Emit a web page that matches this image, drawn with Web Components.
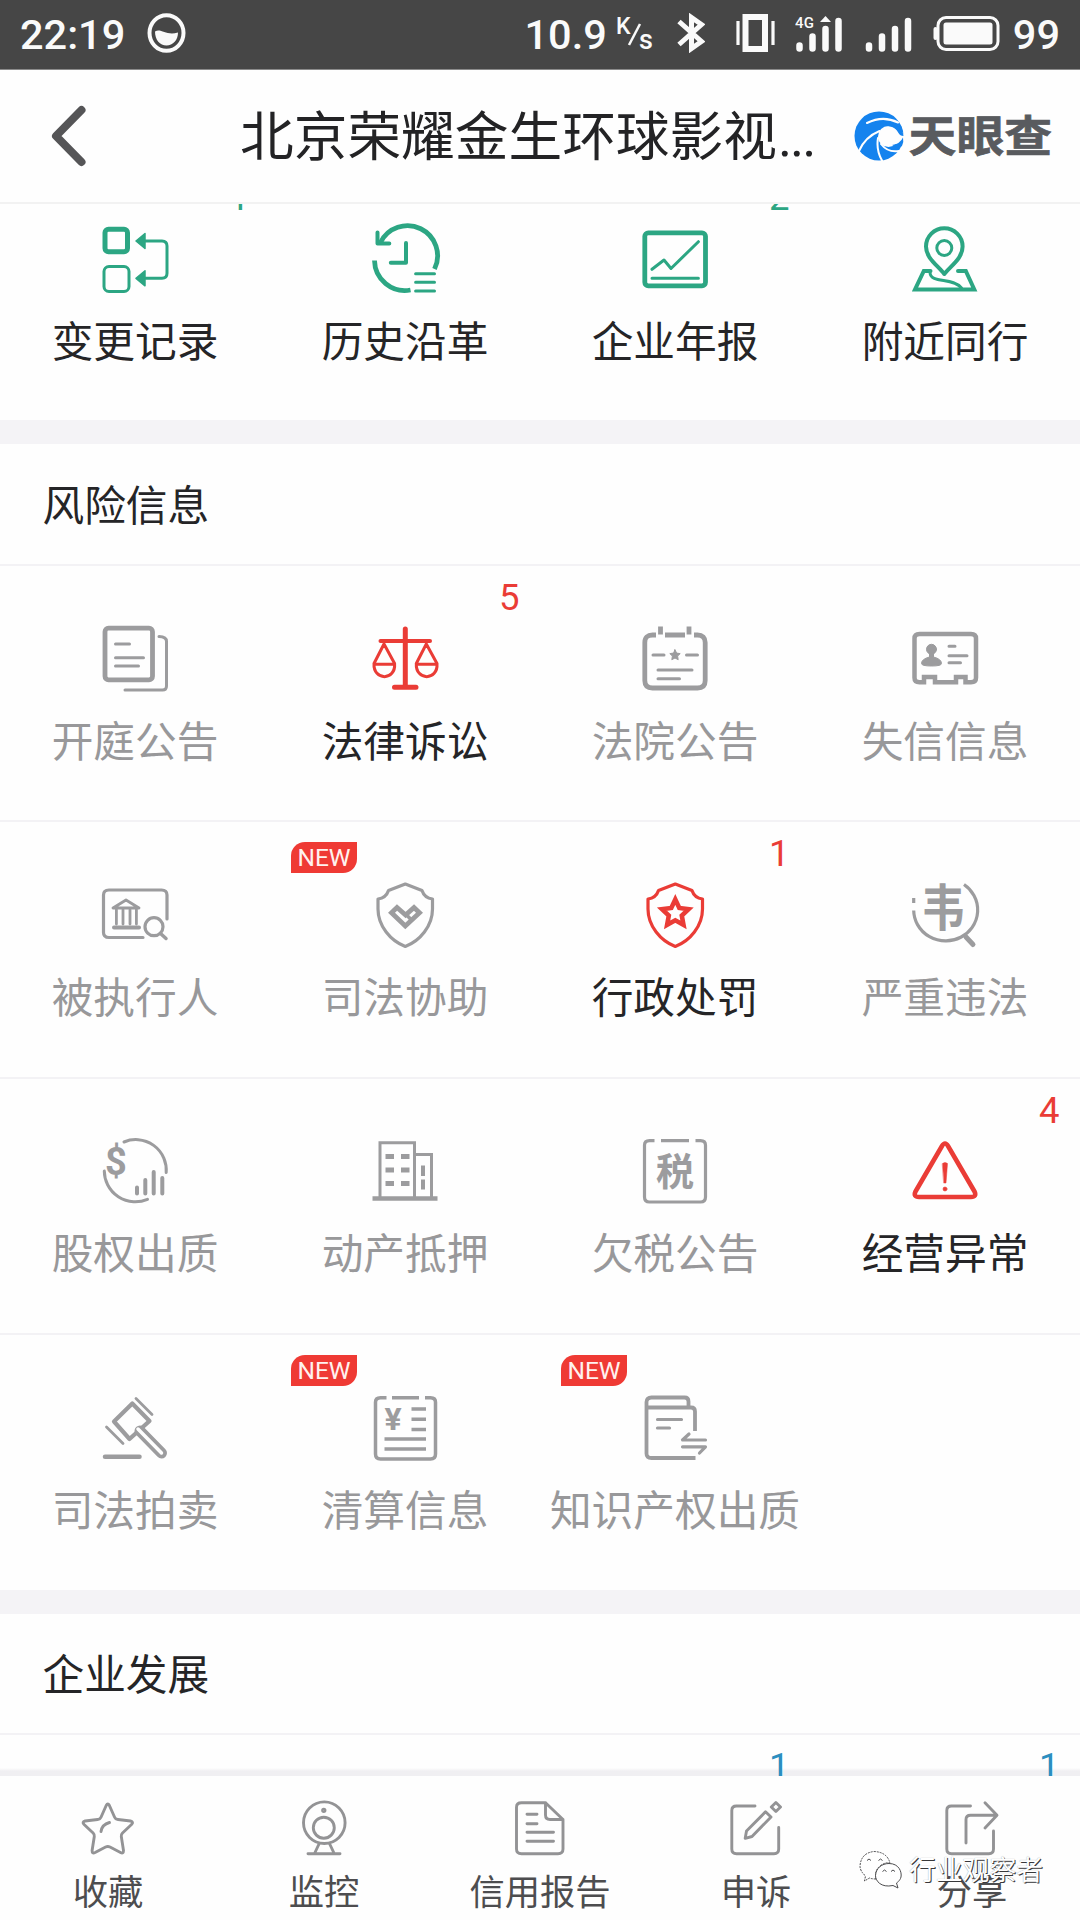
<!DOCTYPE html>
<html lang="zh-CN">
<head>
<meta charset="utf-8">
<title>天眼查</title>
<style>
html,body{margin:0;padding:0;background:#fefefe}
body{font-family:"Noto Sans CJK SC",sans-serif;color:#252527}
</style>
</head>
<body>
<company-app></company-app>
<script>
const define = (name, html, setup) => customElements.define(name, class extends HTMLElement {
  constructor() {
    super();
    this.attachShadow({ mode: 'open' });
  }
  connectedCallback() {
    this.shadowRoot.innerHTML = typeof html === 'function' ? html(this) : html;
    if (setup) setup(this);
  }
});

const SHIELD = '<path stroke-width="3.2" d="M34.3 3 51 9.5Q53.5 17 61.5 18V28C61.5 45 49 60 34.3 65.5 19.6 60 7 45 7 28V18Q15 17 17.5 9.5Z"/>';
const star = (cx, cy, R, r) => Array.from({ length: 10 }, (_, i) => {
  const a = -Math.PI / 2 + i * Math.PI / 5, q = i % 2 ? r : R;
  return (cx + q * Math.cos(a)).toFixed(1) + ',' + (cy + q * Math.sin(a)).toFixed(1);
}).join(' ');

const ICONS = {
  change: '<rect x="4" y="4.2" width="22.5" height="22.5" rx="3.5" stroke-width="5"/><rect x="3" y="41.5" width="25" height="25" rx="5" stroke-width="3"/><path stroke-width="3" d="M43 16H61q5 0 5 5V48.300q0 5-5 5H43"/><path class="f" stroke-width="1.500" d="M35 16 44 8.500V23.500ZM35 53.300 44 45.800V60.800Z"/>',
  history: '<path stroke-width="4.800" stroke-linecap="butt" d="M9.500 17.500A30 30 0 0 1 63.500 44M3.500 35.500A30.500 30.500 0 0 0 39.500 65"/><path stroke-width="4" d="M6.500 7.500V18.500H18.300M35 18V37.700H19.800"/><path stroke-width="3" d="M44.600 48.700H63.500M44.600 57.300H63.500M44.600 66H63.500"/>',
  report: '<rect x="3.800" y="7.800" width="60.700" height="53" rx="3.500" stroke-width="4.800"/><path stroke-width="3" d="M11 44.300 23 35 30 43.500 57.400 16.700M11 53.300H57.400"/>',
  nearby: '<path stroke-width="4" d="M33.300 49C27 40.500 15 33.500 15 21.500a18.300 18.300 0 0 1 36.600 0C51.600 33.500 40 40.500 33.300 49Z"/><circle cx="33.300" cy="23" r="7.500" stroke-width="3"/><path stroke-width="4" stroke-linejoin="miter" d="M19.500 46H12.800L4 64.500H63.300L54.800 46H47"/><path stroke-width="3" d="M19 47.500C19.500 59 42 52 50.500 63"/>',
  court: '<rect x="4" y="3.200" width="47.500" height="51.600" rx="3.500" stroke-width="4.800"/><path stroke-width="3" d="M14.500 19H28.500M14.500 32.700H42.500M14.500 41H37.500M58 11.500q7.500 0 7.500 5V61q0 4-4 4H24"/>',
  law: '<path stroke-width="5" d="M34.300 4V61M23.500 62.300H45"/><path stroke-width="4" d="M9.500 16H59"/><path stroke-width="3" d="M13 19 3 38.500C2 56 25 56 23.600 38.500ZM3 39.300H23.500M55.300 19 45.300 38.500C44.300 56 67.300 56 66 38.500ZM45.300 39.300H65.800"/>',
  notice: '<path stroke-width="4.800" stroke-linecap="butt" d="M15 10H11.500q-7.700 0-7.700 7.500V55.500q0 7.500 7.700 7.500H56.500q7.700 0 7.700-7.500V17.500Q64.200 10 56.500 10H53M24 10H44M19.500 1.500V9.500M48 1.500V9.500"/><polygon class="f" stroke-width="1" points="' + star(34, 30.3, 5.5, 2.7) + '"/><path stroke-width="3" d="M12 30H23M45.500 30H56.500M17 45H51M17 53.700H38.500"/>',
  trust: '<path stroke-width="4.500" stroke-linejoin="miter" d="M13 57.200H8.500q-5 0-5-4.500V13.500q0-4.500 5-4.500H60q5 0 5 4.500V52.700q0 4.500-5 4.500H54.500V52H45V57.200H24V52H13Z"/><circle class="f" cx="20.500" cy="24.300" r="5" stroke-width="1"/><path class="f" stroke-width="1" d="M18.500 27v5Q10.500 34 10.500 38.500 10.500 41 20.500 41T30.500 38.500Q30.500 34 22.500 32V27Z"/><path stroke-width="3" d="M38 21.300H44M38 30.700H56M38 37.700H49.500"/>',
  executed: '<path stroke-width="3.200" d="M42 56.500H8q-5.500 0-5.500-5V14q0-5 5.500-5H60.500q5.500 0 5.500 5V38"/><path stroke-width="2.800" d="M12 27 25 19 38 27ZM15.400 29V43M22 29V43M29 29V43M35.400 29V43"/><path stroke-width="4" d="M13 46.500H38"/><circle cx="53" cy="45.700" r="9" stroke-width="3.200"/><path stroke-width="3.500" d="M59.500 52.500 65 57.500"/>',
  assist: SHIELD + '<path stroke-width="4.800" stroke-linejoin="miter" d="M20.500 31.700 26 26.500 34.600 34 43 26.500 48.500 31.700 34.300 45Z"/><path stroke-width="3.500" d="M34.600 33 40 38.500"/>',
  penalty: SHIELD + '<polygon stroke-width="4.600" stroke-linejoin="miter" points="' + star(34.3, 32.5, 14, 6.8) + '"/>',
  illegal: '<path stroke-width="3.200" stroke-linecap="butt" d="M53 3.500A32 31 0 1 1 2.700 29.500M2.700 17V22"/><path stroke-width="5" d="M55 56 62 63.500"/><text x="32" y="0" font-size="44" text-anchor="middle" transform="translate(0 45) scale(1 1.14)" stroke-width="0">韦</text>',
  equity: '<path stroke-width="3" d="M23 5A30.500 30.500 0 0 1 65.200 35.500M3.300 34A31 31 0 0 0 46.500 62.300"/><text x="15" y="38" font-size="38" text-anchor="middle" style="font-family:Roboto,sans-serif">$</text><path stroke-width="4" d="M36 50.500V56.500M44.300 43V56.500M52.700 35V56.500M61.300 41V56.500"/>',
  estate: '<path stroke-width="3" stroke-linejoin="miter" d="M9 60V5.800H43.500V60M43.500 17.500H60.500V60"/><path stroke-width="4.500" stroke-linecap="butt" d="M1.500 61.500H66.500"/><path stroke-width="5" stroke-linecap="butt" d="M14.500 19.500H23M30 19.500H38.500M14.500 33H23M30 33H38.500M14.500 46.500H23M30 46.500H38.500"/><path stroke-width="4" stroke-linecap="butt" d="M52 28.500V39M52 42.500V52.500"/>',
  tax: '<path stroke-width="3.200" stroke-linecap="butt" d="M13.500 3.700H8.500q-5 0-5 4.500V60q0 5 5 5H59.500q5 0 5-5V8.200q0-4.500-5-4.500H54.500M20 3.700H48"/><text x="34" y="48" font-size="38" text-anchor="middle">税</text>',
  abnormal: '<path stroke-width="4.600" d="M31 9Q34 4 37 9L63.500 54.500Q66 60 60 60H8Q2 60 4.500 54.500Z"/><path class="f" stroke-width=".5" d="M31.500 26.500Q34 24.500 36.500 26.500L35 46H33Z"/><circle class="f" cx="34" cy="52" r="2" stroke-width=".6"/>',
  auction: '<path stroke-width="4.200" d="M31.300 9.500 48.500 27 28.500 45 13 27.500Z"/><path stroke-width="2.800" d="M35 4.500 51 20.500M5.500 33 22 49.500"/><path stroke-width="11" d="M39 37 60.500 59"/><path stroke-width="3.500" style="stroke:#fefefe" d="M37 35 60.500 59"/><path stroke-width="4.500" d="M4 62.700H38.500"/>',
  liquidation: '<path stroke-width="3.500" stroke-linecap="butt" d="M15.500 3.700H9.500q-5 0-5 4.500V60q0 5 5 5H59.500q5 0 5-5V8.200q0-4.500-5-4.500H54M21 3.700H48"/><text x="22" y="36" font-size="32" text-anchor="middle" style="font-family:Roboto,sans-serif">¥</text><path stroke-width="3.500" stroke-linecap="butt" d="M40.500 15H55M40.500 25.200H55M40.500 35.500H55M13.500 45H55M13.500 55H55"/>',
  property: '<path stroke-width="3.800" stroke-linecap="butt" d="M5.500 13.500V8q0-4.500 5-4.500H43.500q4 0 4 4V13M5.500 13.500H50q4 0 4 4V37M5.500 12V59.500q0 4.500 5 4.500H54.500"/><path stroke-width="3.200" d="M16.500 25.500H40.500M16.500 34H28.500M48 40 41.500 46H64.500M41.500 52.800H64.500L58.500 59"/>'
};

const TAB_ICONS = {
  fav: '<path d="M26.200 5.500Q27.800 2.500 29.400 5.500L34.500 17Q35.500 19.300 38 19.500L50.500 21Q54 22 51.500 24.500L42.500 33Q41 34.500 41.300 36.500L43.500 50.500Q43.500 54 40.500 52.500L30 47Q27.800 46 25.600 47L15.100 52.500Q12 54 12.100 50.500L14.300 36.500Q14.600 34.500 13.100 33L4.100 24.500Q1.600 22 5.100 21L17.600 19.500Q20.100 19.300 21.100 17Z"/><path d="M21 31.500Q22 24.500 29.500 22.500"/>',
  monitor: '<circle cx="28.300" cy="22.700" r="20.800"/><circle cx="27.800" cy="27.700" r="10.500"/><circle cx="27.800" cy="10.300" r="1.200"/><path d="M23 44 18.500 53.500M33.700 44 38.200 53.500M12 53.700H44"/>',
  credit: '<path d="M33.500 2.700H9.500q-5 0-5 4.500V49q0 4.700 5 4.700H46q5 0 5-4.700V19.500ZM33.500 2.700V15q0 4.500 4.500 4.500H51M15 14.300H25M15 23.700H25M15 32.300H41.500M15 41.300H41.500"/>',
  appeal: '<path d="M27 6H8.500q-4.700 0-4.700 4.500V49q0 4.700 4.700 4.700H46q4.700 0 4.700-4.700V27.500M17.200 38.300 18.500 31 37.500 11.800 43 17 24 36.500ZM47.900 2.500 52.500 7 47.900 11.500 43.300 7Z"/>',
  share: '<path d="M26.500 6H7.500q-4.700 0-4.700 4.500V49q0 4.700 4.700 4.700H44.800q4.700 0 4.700-4.700V31M22 43V19.500q0-4.200 4.500-4.200H52.500M41 2.700 53 15.300 41 28"/>'
};

define('status-bar', `
<style>
:host{display:flex;align-items:center;height:69px;padding:0 20px 0 20px;background:#464646;color:#fafafa;
 font:500 41.500px/69px Roboto,sans-serif;border-bottom:1px solid #8b8b8b;box-sizing:content-box}
svg{display:block;flex:none;fill:none;stroke:#fafafa}
.s{flex:1}
text{fill:#fafafa;stroke:none;font-family:Roboto,sans-serif}
</style>
<span>22:19</span>
<svg style="margin-left:22px;margin-top:-3px" width="39" height="40" viewBox="0 0 39 40"><ellipse cx="19.500" cy="20" rx="17" ry="17.700" stroke-width="4"/><path fill="#fafafa" stroke="none" d="M8 18.500C14 15 19 23 31 19.500 31 27 26 32.500 19.500 32.500S8 27 8 18.500Z"/></svg>
<span class="s"></span>
<span>10.9</span>
<svg style="margin-left:9px" width="38" height="40" viewBox="0 0 38 40"><text x="0" y="19" font-size="23">K</text><path stroke-width="2.500" d="M13 30 24 9"/><text x="23" y="33.500" font-size="27">s</text></svg>
<svg style="margin-left:23px;margin-top:-3px" width="28" height="40" viewBox="0 0 28 40"><path stroke-width="5" d="M2 8.500 24.500 28.500 14.500 35.500V4.500L24.500 11.500 2 31.500"/></svg>
<svg style="margin-left:31px;margin-top:-3px" width="39" height="40" viewBox="0 0 39 40"><rect x="9.500" y="4" width="19.500" height="32" stroke-width="6"/><path stroke-width="3.200" d="M2 8V32M37 8V32"/></svg>
<svg style="margin-left:20px;margin-top:-2px" width="48" height="40" viewBox="0 0 48 40"><text x="0" y="13.500" font-size="15" textLength="19">4G</text><path stroke-width="6.500" stroke-linecap="round" d="M4.500 31.500V34.500M17.500 22.500V34.500M30.500 15V34.500M43.500 7V34.500"/><path fill="#fafafa" stroke="none" d="M25 8 30.500 2 36 8Z"/></svg>
<svg style="margin-left:22px;margin-top:-2px" width="48" height="40" viewBox="0 0 48 40"><path stroke-width="6.500" stroke-linecap="round" d="M4 31.500V34.500M17 22.500V34.500M30 15V34.500M43 7V34.500"/></svg>
<svg style="margin:-3px 13px 0 20px" width="67" height="40" viewBox="0 0 67 40"><rect x="5" y="4.500" width="60" height="32" rx="8" stroke-width="3"/><rect x="10.500" y="9.500" width="49" height="22" rx="2.500" fill="#fafafa" stroke="none"/><path stroke-width="4" stroke-linecap="round" d="M2.500 16V25"/></svg>
<span>99</span>`);

define('tyc-logo', `
<style>
:host{display:flex;align-items:center;gap:5px}
svg{display:block;flex:none}
span{font-weight:700;font-size:47.800px;line-height:60px;color:#595b5f;-webkit-text-stroke:.8px #595b5f;transform:scaleY(.9);margin-top:-5px}
</style>
<svg width="50" height="50" viewBox="0 0 50 50"><circle cx="25" cy="25" r="24.500" fill="#1583ee"/>
<circle cx="34.500" cy="25.500" r="10.500" fill="#fefefe"/>
<path fill="#fefefe" d="M44 14 50 24 51 33 44 36 40 30Z"/>
<path fill="#1583ee" d="M38 34Q46 33 49 26.500 50 31 48 35 44 38 38 34ZM30 8Q42 9 48 18L49.500 25Q46 25 44.500 22 41 15 33 15Z"/>
<path fill="none" stroke="#fefefe" stroke-width="2" stroke-linecap="round" d="M24 27Q22 39 28 49.500M25.500 20Q11 26 5 40M44 11.500Q29 4 13 12M27 33Q34 42 45 40"/></svg>
<span>天眼查</span>`);

define('nav-bar', `
<style>
:host{display:flex;align-items:center;height:132px;padding:0 28px 0 51px;background:#fefefe;border-bottom:2px solid #f2f2f2;box-sizing:content-box}
svg{display:block;flex:none}
h1{margin:-1px 0 0 153px;font-weight:400;font-size:53.700px;line-height:80px;color:#232325;white-space:nowrap;flex:1}
h1 span{font-family:Roboto,sans-serif;letter-spacing:-2px;margin-left:1px}
</style>
<svg width="36" height="62" viewBox="0 0 36 62"><path d="M30.500 5 5 31 30.500 57" fill="none" stroke="#555557" stroke-width="8" stroke-linecap="round" stroke-linejoin="round"/></svg>
<h1>北京荣耀金生环球影视<span>...</span></h1>
<tyc-logo></tyc-logo>`);

define('info-cell', el => {
  const tone = el.getAttribute('tone') || 'off';
  const icon = ICONS[el.getAttribute('icon')];
  const n = el.getAttribute('count');
  return `
<style>
:host{display:flex;flex-direction:column;align-items:center;position:relative;width:270px;flex:none;
 --c:${{ off: '#9c9c9e', red: '#ea3c36', green: '#2ca683', blue: '#2b8fc0' }[tone]}}
svg{display:block;margin:60.500px 1px 0 0;fill:none;stroke:var(--c);stroke-linecap:round;stroke-linejoin:round;overflow:visible}
.f{fill:var(--c)}
text{fill:var(--c);stroke:none;font-family:"Noto Sans CJK SC",sans-serif;font-weight:700}
.l{margin-top:22px;font-size:41.700px;line-height:48px;white-space:nowrap;color:${tone === 'off' ? '#98989a' : '#252527'}}
.n{position:absolute;right:20.500px;top:14px;font:400 36.500px/40px Roboto,sans-serif;color:var(--c)}
.new{position:absolute;left:21px;top:22px;width:66px;height:31px;border-radius:14px 0 14px 0;background:#ef3a34;color:#fff2ef;
 font:400 24.500px/32px Roboto,sans-serif;text-align:center}
</style>
${icon ? `<svg width="68" height="68" viewBox="0 0 68 68">${icon}</svg>` : ''}
<span class="l"><slot></slot></span>
${n ? `<span class="n">${n}</span>` : ''}
${el.hasAttribute('new') ? '<span class="new">NEW</span>' : ''}`;
});

define('info-row', `
<style>:host{display:flex;box-sizing:border-box;height:256.400px;border-top:2px solid #f3f2f5}::slotted(*){margin-top:-2px}</style><slot></slot>`);

define('section-title', `
<style>:host{display:flex;align-items:center;box-sizing:border-box;height:143.700px;border-top:24px solid #f4f3f6;padding:0 0 2px 42.500px;
font-size:41.700px;line-height:60px}</style><slot></slot>`);

define('tab-item', el => `
<style>
:host{display:flex;flex-direction:column;align-items:center;width:216px;flex:none;color:#4d4d4f;font-size:35.300px;line-height:44px;white-space:nowrap}
svg{display:block;margin:24px 0 24px;fill:none;stroke:#939395;stroke-width:2.900;stroke-linecap:round;stroke-linejoin:round;height:56px}
span{margin-top:-12px}
</style>
<svg width="56" height="56" viewBox="0 0 56 56">${TAB_ICONS[el.getAttribute('icon')]}</svg>
<span><slot></slot></span>`);

define('water-mark', `
<style>
:host{position:absolute;left:859px;top:1848px;display:flex;align-items:center;gap:7px;color:#fff;font-size:26.800px;line-height:42px;white-space:nowrap;
 text-shadow:1px 1px 0 #38383a,0 0 1px #9a9a9c}
svg{display:block}
</style>
<svg width="43" height="42" viewBox="0 0 43 42" fill="#fff" stroke="#4c4c4e" stroke-width="1"><path stroke-dasharray="2 1" d="M17 31Q13 31 10.500 30L5.500 33 6.500 28Q1 23 1 18 2 5 15 3.500 28 4 31 15 26 14 21 18 15 23 17 31Z"/><path d="M30 15.500C40 15.500 43 24 42 29 41 33 37.500 35 37.500 35L39 40 34 37.500C22 40 16.500 33 16.500 27.500 17 20 23 15.500 30 15.500Z"/><path fill="none" d="M8 12.500q2-3 4 0M19.500 12.500q2-3 4 0M23.500 23.500q2-3 4 0M32 23.500q2-3 4 0"/></svg>
<span>行业观察者</span>`);

define('company-app', `
<style>
:host{display:flex;flex-direction:column;position:relative;width:1080px;height:1920px;background:#fefefe;overflow:hidden}
status-bar,nav-bar{flex:none}
main{display:flex;flex-direction:column;height:1572px;flex:none;overflow:hidden}
main>*{flex:none}
.first{margin-top:-40px;border-color:transparent}
.last{height:44px;background:linear-gradient(#fefefe 0 33px,#f0eff2 36px 42px,#f4f3f6)}
footer{display:flex;flex:1}
</style>
<status-bar></status-bar>
<nav-bar></nav-bar>
<main>
 <info-row class="first">
  <info-cell tone="green" icon="change" count="1">变更记录</info-cell>
  <info-cell tone="green" icon="history">历史沿革</info-cell>
  <info-cell tone="green" icon="report" count="2">企业年报</info-cell>
  <info-cell tone="green" icon="nearby">附近同行</info-cell>
 </info-row>
 <section-title>风险信息</section-title>
 <info-row>
  <info-cell icon="court">开庭公告</info-cell>
  <info-cell tone="red" icon="law" count="5">法律诉讼</info-cell>
  <info-cell icon="notice">法院公告</info-cell>
  <info-cell icon="trust">失信信息</info-cell>
 </info-row>
 <info-row>
  <info-cell icon="executed">被执行人</info-cell>
  <info-cell icon="assist" new>司法协助</info-cell>
  <info-cell tone="red" icon="penalty" count="1">行政处罚</info-cell>
  <info-cell icon="illegal">严重违法</info-cell>
 </info-row>
 <info-row>
  <info-cell icon="equity">股权出质</info-cell>
  <info-cell icon="estate">动产抵押</info-cell>
  <info-cell icon="tax">欠税公告</info-cell>
  <info-cell tone="red" icon="abnormal" count="4">经营异常</info-cell>
 </info-row>
 <info-row>
  <info-cell icon="auction">司法拍卖</info-cell>
  <info-cell icon="liquidation" new>清算信息</info-cell>
  <info-cell icon="property" new>知识产权出质</info-cell>
 </info-row>
 <section-title>企业发展</section-title>
 <info-row class="last">
  <info-cell></info-cell>
  <info-cell></info-cell>
  <info-cell tone="blue" count="1"></info-cell>
  <info-cell tone="blue" count="1"></info-cell>
 </info-row>
</main>
<footer>
 <tab-item icon="fav">收藏</tab-item>
 <tab-item icon="monitor">监控</tab-item>
 <tab-item icon="credit">信用报告</tab-item>
 <tab-item icon="appeal">申诉</tab-item>
 <tab-item icon="share">分享</tab-item>
</footer>
<water-mark></water-mark>`);
</script>
</body>
</html>
